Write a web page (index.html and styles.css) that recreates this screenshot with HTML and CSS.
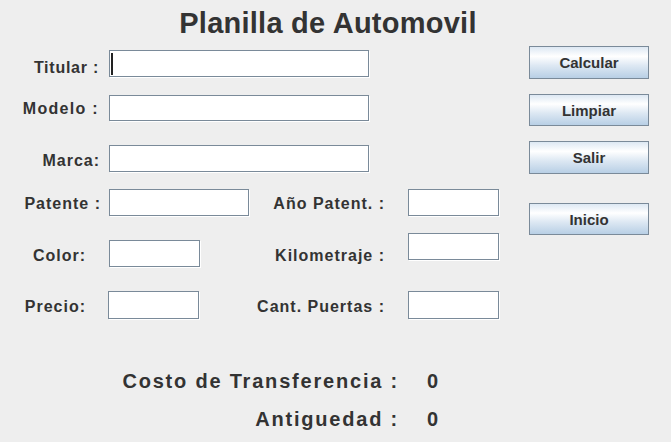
FILE: index.html
```html
<!DOCTYPE html>
<html lang="es">
<head>
<meta charset="utf-8">
<title>Planilla de Automovil</title>
<link rel="stylesheet" href="styles.css">
</head>
<body>
<div class="window">
  <h1 class="title">Planilla de Automovil</h1>
  <div class="content">
    <form class="form">
      <div class="row row-1">
        <label class="lbl lbl-tight w-99 mt-9">Titular :</label>
        <div class="field-wrap ml-10">
          <input class="field w-260 h-27" type="text">
          <span class="caret"></span>
        </div>
      </div>
      <div class="row row-2">
        <label class="lbl lbl-wide w-99 mt-5">Modelo :</label>
        <input class="field w-260 h-26 ml-10" type="text">
      </div>
      <div class="row row-3">
        <label class="lbl w-100 mt-7">Marca:</label>
        <input class="field w-260 h-27 ml-9" type="text">
      </div>
      <div class="row row-4">
        <label class="lbl w-101 mt-6">Patente :</label>
        <input class="field w-140 h-27 ml-8" type="text">
        <label class="lbl w-136 mt-6">Año Patent. :</label>
        <input class="field w-91 h-27 ml-23" type="text">
      </div>
      <div class="row row-5">
        <label class="lbl w-86 mt-14">Color:</label>
        <input class="field w-91 h-27 ml-23 mt-7" type="text">
        <label class="lbl w-185 mt-14">Kilometraje :</label>
        <input class="field w-91 h-27 ml-23" type="text">
      </div>
      <div class="row row-6">
        <label class="lbl w-86 mt-7">Precio:</label>
        <input class="field w-91 h-28 ml-22" type="text">
        <label class="lbl w-186 mt-7">Cant. Puertas :</label>
        <input class="field w-91 h-28 ml-23" type="text">
      </div>
    </form>
    <div class="actions">
      <button class="btn btn-calcular" type="button">Calcular</button>
      <button class="btn btn-limpiar" type="button">Limpiar</button>
      <button class="btn btn-salir" type="button">Salir</button>
      <button class="btn btn-inicio" type="button">Inicio</button>
    </div>
  </div>
  <div class="results">
    <span class="res-label">Costo de Transferencia :</span>
    <span class="res-value">0</span>
    <span class="res-label">Antiguedad :</span>
    <span class="res-value">0</span>
  </div>
</div>
</body>
</html>
```

FILE: styles.css
```css
* { box-sizing: border-box; }
html, body { margin: 0; padding: 0; }
body {
  background: #eeeeee;
  font-family: "Liberation Sans", Arial, sans-serif;
  color: #333333;
}
.window { width: 671px; height: 442px; overflow: hidden; }

.title {
  margin: 0;
  padding-top: 6px;
  width: 656px;
  text-align: center;
  font-size: 29px;
  line-height: 34px;
  font-weight: bold;
  letter-spacing: 0.25px;
}

.content { display: flex; align-items: flex-start; }
.form { width: 529px; margin: 0; flex: none; }

.row { display: flex; align-items: flex-start; }
.row-1 { margin-top: 10px; height: 27px; }
.row-2 { margin-top: 18px; height: 26px; }
.row-3 { margin-top: 24px; height: 27px; }
.row-4 { margin-top: 17px; height: 27px; }
.row-5 { margin-top: 17px; height: 34px; }
.row-6 { margin-top: 24px; height: 28px; }

.lbl {
  flex: none;
  font-size: 16px;
  line-height: 18px;
  font-weight: bold;
  letter-spacing: 1px;
  text-align: right;
  white-space: nowrap;
}
.lbl-tight { letter-spacing: 0.75px; }
.lbl-wide { letter-spacing: 1.3px; }

.field {
  display: block;
  flex: none;
  margin: 0;
  padding: 0;
  border: 1px solid #7a8a99;
  background: #ffffff;
  box-shadow: 1px 1px 0 #ffffff;
  outline: none;
}
.field-wrap { position: relative; flex: none; }
.caret {
  position: absolute;
  left: 2px;
  top: 3px;
  width: 2px;
  height: 22px;
  background: #222222;
}

.w-86 { width: 86px; }
.w-91 { width: 91px; }
.w-99 { width: 99px; }
.w-100 { width: 100px; }
.w-101 { width: 101px; }
.w-136 { width: 136px; }
.w-140 { width: 140px; }
.w-185 { width: 185px; }
.w-186 { width: 186px; }
.w-260 { width: 260px; }
.h-26 { height: 26px; }
.h-27 { height: 27px; }
.h-28 { height: 28px; }
.ml-8 { margin-left: 8px; }
.ml-9 { margin-left: 9px; }
.ml-10 { margin-left: 10px; }
.ml-22 { margin-left: 22px; }
.ml-23 { margin-left: 23px; }
.mt-5 { margin-top: 5px; }
.mt-6 { margin-top: 6px; }
.mt-7 { margin-top: 7px; }
.mt-9 { margin-top: 9px; }
.mt-14 { margin-top: 14px; }

.actions { display: flex; flex-direction: column; width: 120px; flex: none; }
.btn {
  display: block;
  width: 120px;
  margin: 0;
  padding: 0;
  border: 1px solid #7a8a99;
  background: linear-gradient(#dde8f3 0%, #ffffff 30%, #dde8f3 60%, #b8cfe5 100%);
  font-family: "Liberation Sans", Arial, sans-serif;
  font-size: 15px;
  font-weight: bold;
  color: #333333;
  text-align: center;
}
.btn-calcular { margin-top: 6px; height: 33px; }
.btn-limpiar { margin-top: 15px; height: 32px; }
.btn-salir { margin-top: 15px; height: 33px; }
.btn-inicio { margin-top: 29px; height: 32px; }

.results {
  margin-top: 51px;
  display: grid;
  grid-template-columns: 399px auto;
  column-gap: 28px;
  row-gap: 15px;
  font-size: 20px;
  line-height: 23px;
  font-weight: bold;
  letter-spacing: 1.8px;
}
.res-label { text-align: right; white-space: nowrap; }
.res-value { letter-spacing: 0; }
```
